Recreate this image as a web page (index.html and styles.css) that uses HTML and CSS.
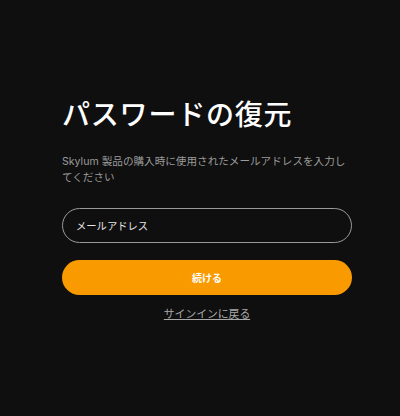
FILE: index.html
```html
<!DOCTYPE html>
<html lang="ja">
<head>
<meta charset="utf-8">
<link rel="stylesheet" href="styles.css">
</head>
<body>
<main class="page">
  <h1 class="title">パスワードの復元</h1>
  <p class="lead">Skylum 製品の購入時に使用されたメールアドレスを入力してください</p>
  <form class="form">
    <input class="field" type="email" placeholder="メールアドレス">
    <button class="submit" type="button">続ける</button>
  </form>
  <a class="back" href="#">サインインに戻る</a>
</main>
</body>
</html>
```

FILE: styles.css
```css
html, body {
  margin: 0;
  padding: 0;
  background: #0f0f0f;
  height: 100%;
}
body {
  font-family: "Inter", "Noto Sans CJK JP", sans-serif;
  color: #fff;
}
.page {
  width: 290px;
  margin-left: 62px;
  padding-top: 95px;
  display: flex;
  flex-direction: column;
}
.title {
  margin: 0;
  font-family: "Noto Sans CJK JP", sans-serif;
  font-size: 28px;
  line-height: 36px;
  font-weight: 500;
  letter-spacing: 0.8px;
  color: #fff;
}
.lead {
  margin: 23px 0 0;
  font-size: 10.6px;
  line-height: 16px;
  color: #9b9b9b;
}
.form {
  display: flex;
  flex-direction: column;
  margin-top: 22px;
}
.field {
  box-sizing: border-box;
  height: 35px;
  border: 1px solid #9a9a9a;
  border-radius: 18px;
  background: transparent;
  padding: 0 13px;
  font-family: inherit;
  font-size: 10.3px;
  color: #fff;
  outline: none;
}
.field::placeholder {
  color: #e6e6e6;
}
.submit {
  margin-top: 17px;
  height: 35px;
  border: 0;
  border-radius: 18px;
  background: #f99a00;
  color: #fff;
  font-family: inherit;
  font-size: 10px;
  font-weight: 700;
}
.back {
  align-self: center;
  margin-top: 12px;
  font-size: 10.8px;
  line-height: 16px;
  color: #a8a8a8;
  text-decoration: underline;
}
```
